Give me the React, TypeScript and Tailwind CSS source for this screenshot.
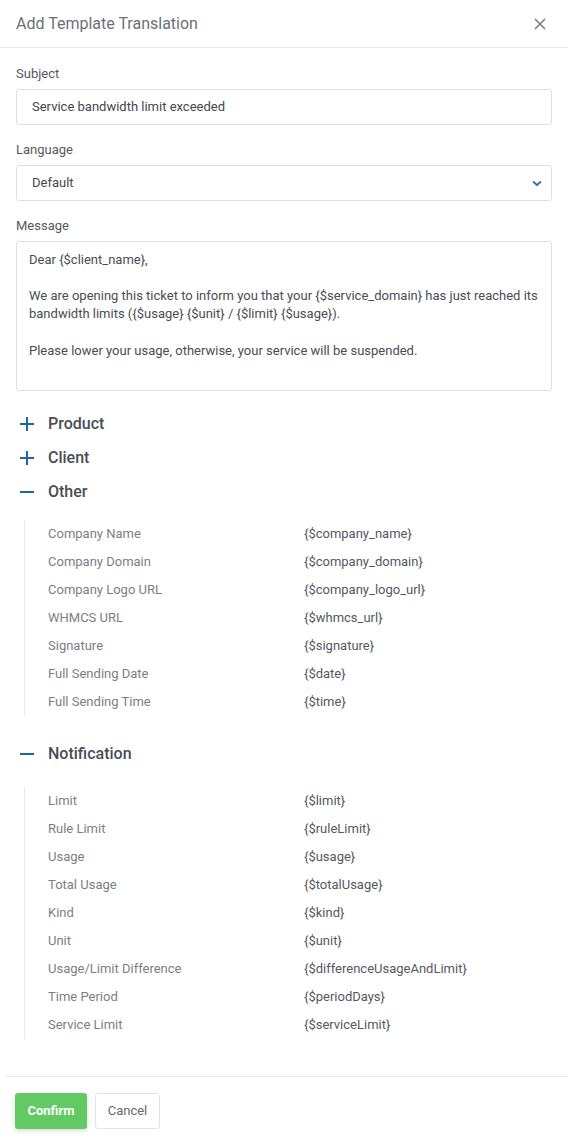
import React from 'react';

const otherVars = [
    ['Company Name', '{$company_name}'],
    ['Company Domain', '{$company_domain}'],
    ['Company Logo URL', '{$company_logo_url}'],
    ['WHMCS URL', '{$whmcs_url}'],
    ['Signature', '{$signature}'],
    ['Full Sending Date', '{$date}'],
    ['Full Sending Time', '{$time}'],
];

const notificationVars = [
    ['Limit', '{$limit}'],
    ['Rule Limit', '{$ruleLimit}'],
    ['Usage', '{$usage}'],
    ['Total Usage', '{$totalUsage}'],
    ['Kind', '{$kind}'],
    ['Unit', '{$unit}'],
    ['Usage/Limit Difference', '{$differenceUsageAndLimit}'],
    ['Time Period', '{$periodDays}'],
    ['Service Limit', '{$serviceLimit}'],
];

const PlusIcon = () => (
    <svg width="14" height="14" viewBox="0 0 14 14" className="shrink-0">
        <path d="M7 0v14M0 7h14" stroke="#2164a8" strokeWidth="2" />
    </svg>
);

const MinusIcon = () => (
    <svg width="14" height="14" viewBox="0 0 14 14" className="shrink-0">
        <path d="M0 7h14" stroke="#2164a8" strokeWidth="2" />
    </svg>
);

const SectionHeader = ({ title, open }: { title: string; open?: boolean }) => (
    <div className="flex items-center h-[34px] pl-[4px]">
        {open ? <MinusIcon /> : <PlusIcon />}
        <span className="ml-[14px] text-[16px] font-medium text-[#4a4d54]">{title}</span>
    </div>
);

const VarList = ({ rows }: { rows: string[][] }) => (
    <div className="ml-[8px] border-l border-[#e8e9ec] pl-[23px]">
        {rows.map(([label, value]) => (
            <div key={label} className="grid grid-cols-[256px_1fr] h-[28px] items-center text-[13px]">
                <span className="text-[#7b7e86]">{label}</span>
                <span className="text-[#55585f]">{value}</span>
            </div>
        ))}
    </div>
);

const App = () => {
    return (
        <div className="w-[568px] min-h-[1143px] bg-white font-['Roboto',sans-serif]">
            {/* Header */}
            <div className="flex items-center justify-between h-[48px] px-4 border-b border-[#e6e7eb]">
                <h1 className="text-[16px] text-[#6c6f76] font-normal">Add Template Translation</h1>
                <svg width="12" height="12" viewBox="0 0 12 12" className="mr-[6px]">
                    <path d="M1 1l10 10M11 1L1 11" stroke="#7b7e85" strokeWidth="1.6" />
                </svg>
            </div>

            <div className="px-4 pt-[16px]">
                <label className="block text-[13px] leading-[20px] text-[#55585e]">Subject</label>
                <div className="mt-[5px] h-[36px] border border-[#dcdee3] rounded-[3px] flex items-center px-[15px] text-[13px] text-[#44474e]">
                    Service bandwidth limit exceeded
                </div>

                <label className="block mt-[15px] text-[13px] leading-[20px] text-[#55585e]">Language</label>
                <div className="mt-[5px] h-[36px] border border-[#dcdee3] rounded-[3px] flex items-center justify-between pl-[15px] pr-[9px] text-[13px] text-[#44474e]">
                    <span>Default</span>
                    <svg width="10" height="7" viewBox="0 0 10 7">
                        <path d="M1 1.5l4 3.5 4-3.5" stroke="#2a6bb0" strokeWidth="1.8" fill="none" />
                    </svg>
                </div>

                <label className="block mt-[15px] text-[13px] leading-[20px] text-[#55585e]">Message</label>
                <div className="mt-[5px] h-[150px] border border-[#dcdee3] rounded-[3px] px-[12px] pt-[9px] text-[13px] leading-[18px] text-[#4a4d54]">
                    <p>Dear {'{$client_name}'},</p>
                    <p className="mt-[18px]">
                        We are opening this ticket to inform you that your {'{$service_domain}'} has just reached its bandwidth limits ({'{$usage}'} {'{$unit}'} / {'{$limit}'} {'{$usage}'}).
                    </p>
                    <p className="mt-[19px]">Please lower your usage, otherwise, your service will be suspended.</p>
                </div>

                <div className="mt-[16px]">
                    <SectionHeader title="Product" />
                    <SectionHeader title="Client" />
                    <SectionHeader title="Other" open />
                    <div className="mt-[11px]">
                        <VarList rows={otherVars} />
                    </div>
                    <div className="mt-[21px]">
                        <SectionHeader title="Notification" open />
                    </div>
                    <div className="mt-[16px]">
                        <VarList rows={notificationVars} />
                    </div>
                </div>
            </div>

            {/* Footer */}
            <div className="mt-[37px] ml-[6px] border-t border-[#e6e7eb] pt-[16px] pb-[15px] pl-[9px] flex gap-[8px]">
                <button className="h-[36px] w-[72px] rounded-[3px] bg-[#62ca62] text-white text-[13px] font-bold shadow-[0_2px_4px_rgba(0,0,0,0.15)]">
                    Confirm
                </button>
                <button className="h-[36px] w-[65px] rounded-[3px] border border-[#e3e4e8] bg-white text-[#666970] text-[13px]">
                    Cancel
                </button>
            </div>
        </div>
    );
};

export default App;
